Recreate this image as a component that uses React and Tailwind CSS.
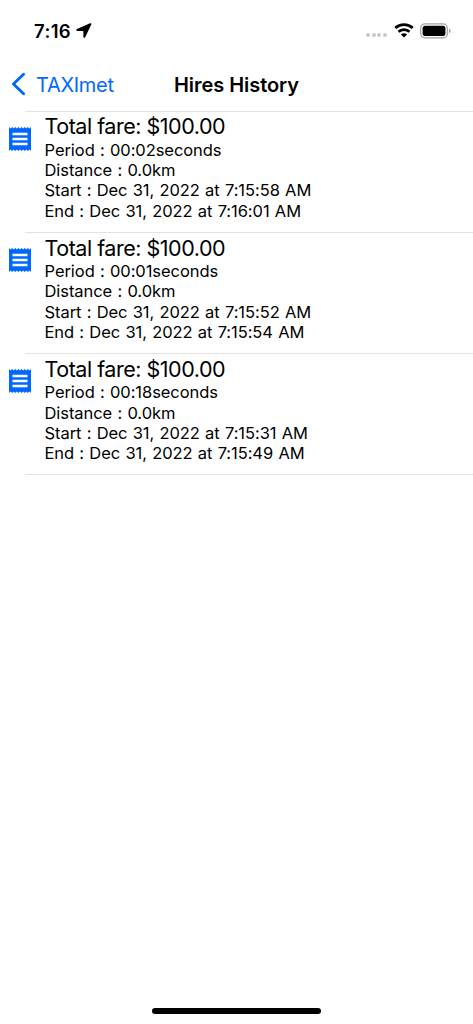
import { useState } from 'react';

const HIRES = [
  {
    id: 1,
    fare: '$100.00',
    period: '00:02',
    distance: '0.0',
    start: 'Dec 31, 2022 at 7:15:58 AM',
    end: 'Dec 31, 2022 at 7:16:01 AM',
  },
  {
    id: 2,
    fare: '$100.00',
    period: '00:01',
    distance: '0.0',
    start: 'Dec 31, 2022 at 7:15:52 AM',
    end: 'Dec 31, 2022 at 7:15:54 AM',
  },
  {
    id: 3,
    fare: '$100.00',
    period: '00:18',
    distance: '0.0',
    start: 'Dec 31, 2022 at 7:15:31 AM',
    end: 'Dec 31, 2022 at 7:15:49 AM',
  },
];

export default function App() {
  const [hires] = useState(HIRES);

  return (
    <div className="flex h-[1024px] w-[473px] flex-col overflow-hidden bg-white font-['Inter',sans-serif] text-black">
      <StatusBar />

      {/* Navigation bar */}
      <header className="grid h-[51.5px] shrink-0 grid-cols-[1fr_auto_1fr] items-center">
        <button className="flex items-center pl-[11px] text-[#0068ff]">
          <svg className="-mt-px" width="15" height="24" viewBox="0 0 15 24" fill="none">
            <path d="M12.6 2.2 2.4 12l10.2 9.8" stroke="currentColor" strokeWidth="2.9" strokeLinecap="round" strokeLinejoin="round" />
          </svg>
          <span className="ml-[10px] text-[20px] leading-6 tracking-[-0.3px]">TAXImet</span>
        </button>
        <h1 className="text-[20px] leading-6 font-semibold tracking-[-0.05px]">Hires History</h1>
      </header>

      {/* Hires */}
      <ul>
        {hires.map(hire => (
          <HireRow key={hire.id} hire={hire} />
        ))}
      </ul>
      <div className="ml-[25px] h-px bg-[#e2e2e3]" />

      {/* Home indicator */}
      <div className="mx-auto mt-auto mb-[10px] h-[6px] w-[169px] shrink-0 rounded-full bg-black" />
    </div>
  );
}

function StatusBar() {
  return (
    <div className="flex h-[59px] shrink-0 items-center justify-between pt-[2px] pr-[22px] pl-[34px]">
      <div className="flex items-center">
        <span className="text-[18.5px] leading-6 font-semibold tracking-[0.35px]">7:16</span>
        <svg className="ml-[5px]" width="16" height="15" viewBox="0 0 16 15">
          <path d="M14 .3 1 6c-1.300.6-1 1.900.4 1.900l5.600.1c.2 0 .3.1.3.3l.1 5.300c0 1.400 1.300 1.700 1.900.4l6-12.500C15.700.5 15-.1 14 .3Z" />
        </svg>
      </div>
      <div className="flex items-center">
        <div className="mt-[9px] flex gap-[1.6px]">
          {[0, 1, 2, 3].map(dot => (
            <span key={dot} className="size-[4px] rounded-full bg-[#c9c9cb]" />
          ))}
        </div>
        <svg className="ml-[7px]" width="20" height="15" viewBox="0 0 20 15" fill="none" stroke="black" strokeWidth="2.8">
          <path d="M1.300 5C6.200.5 13.800.5 18.700 5" />
          <path d="M4.500 8.700c3.100-2.900 7.900-2.900 11 0" />
          <path d="M10 14.400 6.900 11.500c1.700-1.700 4.500-1.700 6.200 0Z" fill="black" stroke="none" />
        </svg>
        <svg className="ml-[6px]" width="31" height="16" viewBox="0 0 31 16">
          <rect x="0.7" y="0.9" width="26.6" height="14" rx="4.2" fill="white" stroke="#a0a0a2" strokeWidth="1.2" />
          <rect x="2.6" y="2.8" width="22.8" height="10.2" rx="2.5" />
          <path d="M29 5.500c2 .9 2 3.900 0 4.800Z" fill="#a0a0a2" />
        </svg>
      </div>
    </div>
  );
}

function HireRow({ hire }) {
  return (
    <li>
      <div className="ml-[25px] h-px bg-[#e2e2e3]" />
      <div className="flex h-[120.25px] items-start pl-[9px]">
        <ReceiptIcon />
        <div className="ml-[13.5px] pt-[1.9px] whitespace-nowrap">
          <p className="text-[21.5px] leading-[26.5px] tracking-[-0.48px]">Total fare: {hire.fare}</p>
          <div className="text-[16.5px] leading-[20.25px] tracking-[-0.06px] [word-spacing:0.7px]">
            <p>Period : {hire.period}seconds</p>
            <p>Distance : {hire.distance}km</p>
            <p>Start : {hire.start}</p>
            <p>End : {hire.end}</p>
          </div>
        </div>
      </div>
    </li>
  );
}

function ReceiptIcon() {
  return (
    <svg className="mt-[15px] shrink-0" width="22" height="24" viewBox="0 0 22 24">
      <path
        d="M0 0l1.57 1.5L3.140 0l1.570 1.500L6.290 0l1.570 1.500L9.430 0 11 1.500 12.570 0l1.570 1.500L15.710 0l1.570 1.500L18.860 0l1.570 1.500L22 0v24l-1.570-1.500L18.860 24l-1.580-1.500L15.710 24l-1.570-1.500L12.570 24 11 22.500 9.430 24l-1.570-1.500L6.290 24l-1.580-1.500L3.140 24l-1.570-1.500L0 24Z"
        fill="#0068ff"
      />
      <path d="M3.5 7h15M3.5 12h15M3.5 17h15" stroke="white" strokeWidth="2.4" />
    </svg>
  );
}
